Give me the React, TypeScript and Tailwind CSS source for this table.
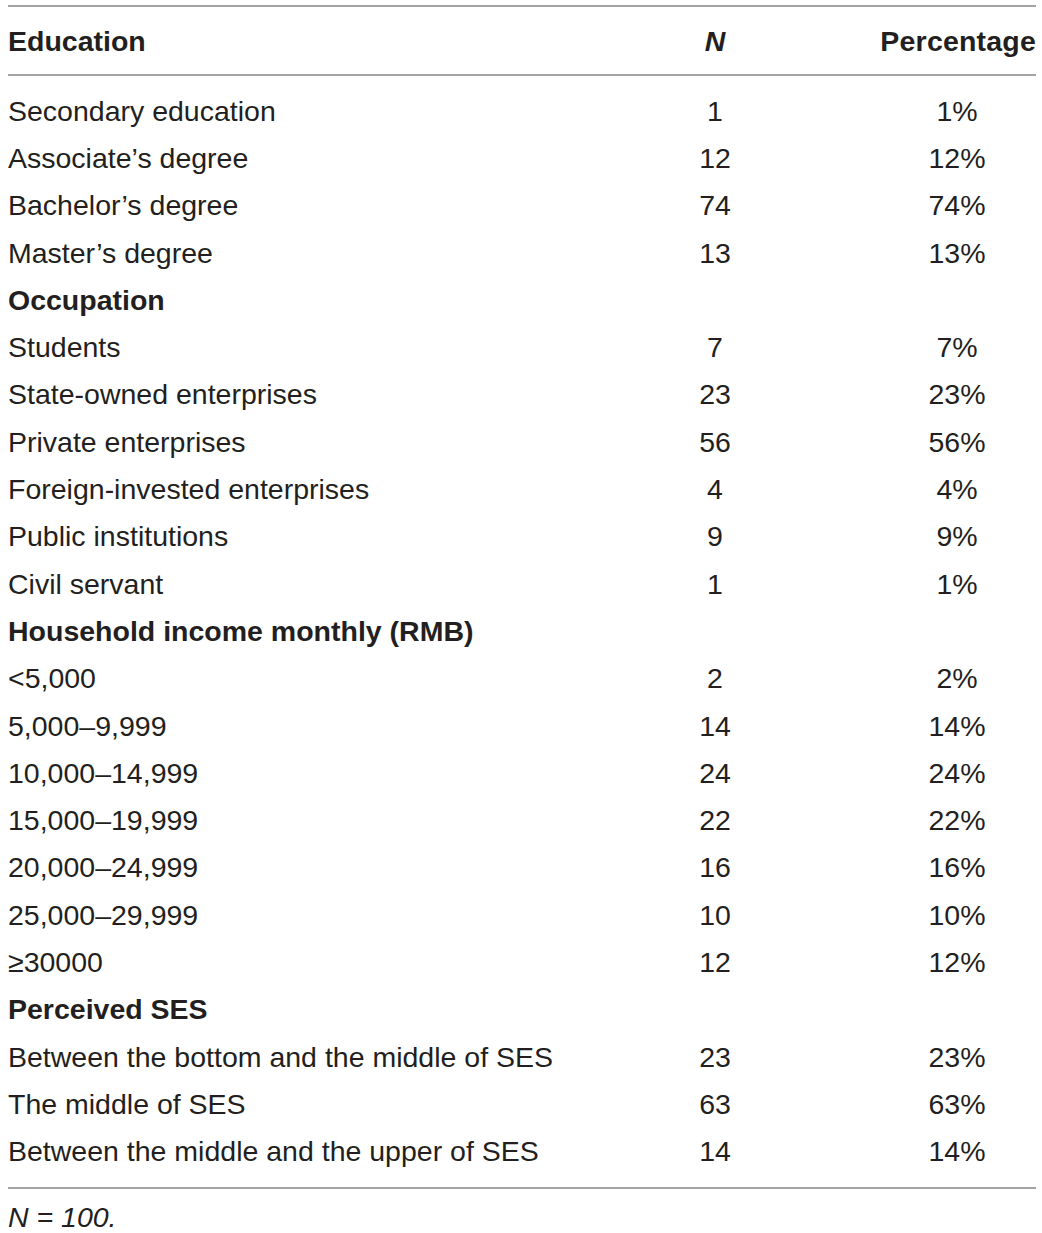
import React from 'react';

type Row = { label: string; n?: string; pct?: string; head?: boolean };

const rows: Row[] = [
  { label: 'Secondary education', n: '1', pct: '1%' },
  { label: 'Associate’s degree', n: '12', pct: '12%' },
  { label: 'Bachelor’s degree', n: '74', pct: '74%' },
  { label: 'Master’s degree', n: '13', pct: '13%' },
  { label: 'Occupation', head: true },
  { label: 'Students', n: '7', pct: '7%' },
  { label: 'State-owned enterprises', n: '23', pct: '23%' },
  { label: 'Private enterprises', n: '56', pct: '56%' },
  { label: 'Foreign-invested enterprises', n: '4', pct: '4%' },
  { label: 'Public institutions', n: '9', pct: '9%' },
  { label: 'Civil servant', n: '1', pct: '1%' },
  { label: 'Household income monthly (RMB)', head: true },
  { label: '<5,000', n: '2', pct: '2%' },
  { label: '5,000–9,999', n: '14', pct: '14%' },
  { label: '10,000–14,999', n: '24', pct: '24%' },
  { label: '15,000–19,999', n: '22', pct: '22%' },
  { label: '20,000–24,999', n: '16', pct: '16%' },
  { label: '25,000–29,999', n: '10', pct: '10%' },
  { label: '≥30000', n: '12', pct: '12%' },
  { label: 'Perceived SES', head: true },
  { label: 'Between the bottom and the middle of SES', n: '23', pct: '23%' },
  { label: 'The middle of SES', n: '63', pct: '63%' },
  { label: 'Between the middle and the upper of SES', n: '14', pct: '14%' },
];

export default function App() {
  return (
    <div
      className="w-[1042px] h-[1233px] overflow-hidden bg-white pt-[5px] pl-[8px] pr-[6px] text-[#231f20] text-[28.5px] leading-[32px]"
      style={{ fontFamily: '"Liberation Sans", Arial, sans-serif' }}
    >
      <div className="border-t-2 border-[#a3a3a3]">
        {/* header */}
        <div className="flex items-center h-[69px] border-b-2 border-[#a3a3a3] font-bold">
          <div className="flex-1">Education</div>
          <div className="w-[150px] text-center italic">N</div>
          <div className="w-[158px] ml-[88px] text-right tracking-[0.2px]">Percentage</div>
        </div>

        <div className="pt-[11px] pb-[12px] border-b-2 border-[#a3a3a3]">
          {rows.map((r) => (
            <div key={r.label} className="flex items-center h-[47.3px]">
              <div className={r.head ? 'flex-1 font-bold' : 'flex-1'}>{r.label}</div>
              <div className="w-[150px] text-center">{r.n}</div>
              <div className="w-[158px] ml-[88px] text-center">{r.pct}</div>
            </div>
          ))}
        </div>

        <div className="pt-[14px] italic leading-[28px]">N = 100.</div>
      </div>
    </div>
  );
}
